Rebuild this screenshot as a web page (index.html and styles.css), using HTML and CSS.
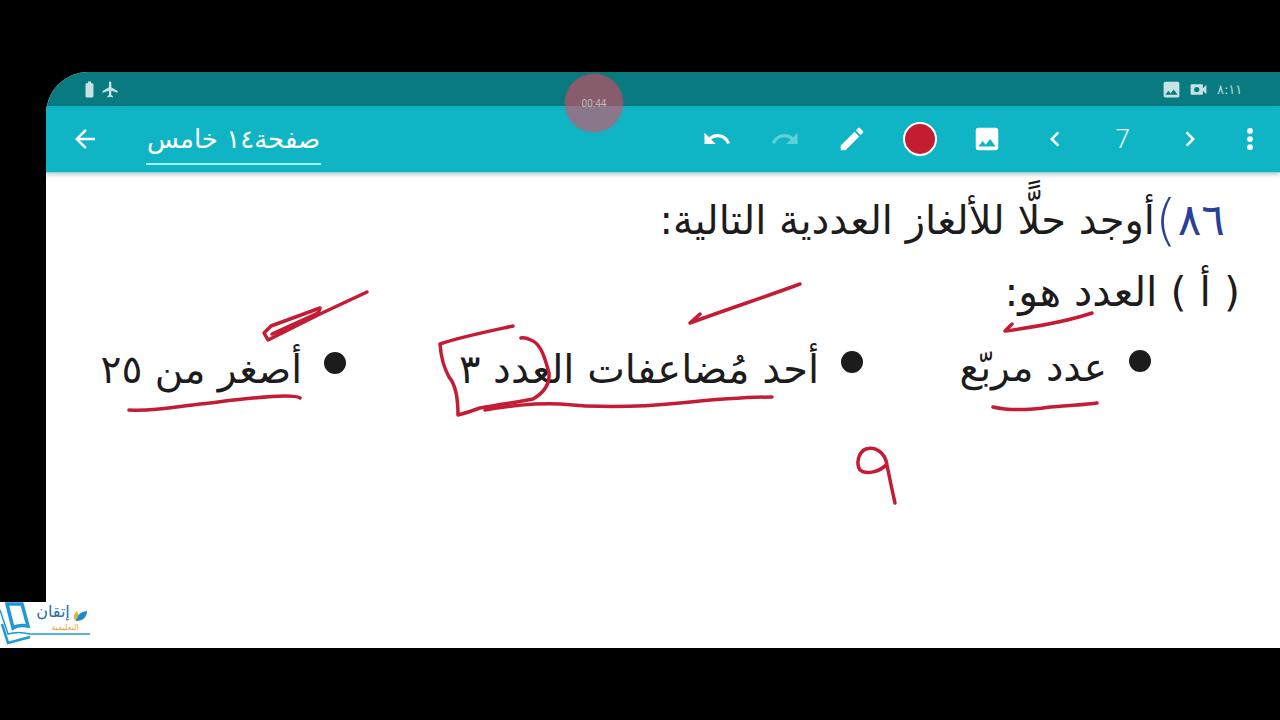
FILE: index.html
```html
<!DOCTYPE html>
<html lang="ar">
<head>
    <meta charset="UTF-8">
    <meta name="viewport" content="width=device-width, initial-scale=1.0">
    <title>Whiteboard recording</title>
    <link rel="stylesheet" href="styles.css">
</head>
<body>
    <div class="screen">
        <div class="status-bar">
            <div class="status-group left">
                <svg class="status-icon" viewBox="0 0 24 24"><path d="M15.67 4H14V2h-4v2H8.33C7.6 4 7 4.6 7 5.33v15.33C7 21.4 7.6 22 8.33 22h7.33c.74 0 1.34-.6 1.34-1.33V5.33C17 4.6 16.4 4 15.67 4z"/></svg>
                <svg class="status-icon" viewBox="0 0 24 24"><path d="M21 16v-2l-8-5V3.5c0-.83-.67-1.5-1.5-1.5S10 2.67 10 3.5V9l-8 5v2l8-2.5V19l-2 1.5V22l3.5-1 3.5 1v-1.5L13 19v-5.5l8 2.5z"/></svg>
            </div>
            <div class="status-group">
                <svg class="status-icon big" viewBox="0 0 24 24"><path d="M21 19V5c0-1.1-.9-2-2-2H5c-1.1 0-2 .9-2 2v14c0 1.1.9 2 2 2h14c1.1 0 2-.9 2-2zM8.5 13.5l2.5 3.01L14.5 12l4.5 6H5l3.5-4.5z"/></svg>
                <svg class="status-icon big" viewBox="0 0 24 24"><path d="M17 10.5V7c0-.55-.45-1-1-1H4c-.55 0-1 .45-1 1v10c0 .55.45 1 1 1h12c.55 0 1-.45 1-1v-3.5l4 4v-11l-4 4z"/><circle cx="10" cy="12" r="3" fill="#087a80"/></svg>
                <span class="clock">٨:١١</span>
            </div>
        </div>

        <div class="toolbar">
            <svg class="tool back" viewBox="0 0 24 24"><path d="M20 11H7.83l5.59-5.59L12 4l-8 8 8 8 1.41-1.41L7.83 13H20v-2z"/></svg>
            <div class="doc-title" dir="rtl">صفحة١٤ خامس</div>
            <div class="tools">
                <div class="tool-slot"><svg class="tool" viewBox="0 0 24 24"><path d="M12.5 8c-2.65 0-5.05.99-6.9 2.6L2 7v9h9l-3.62-3.62c1.39-1.16 3.16-1.88 5.12-1.88 3.54 0 6.55 2.31 7.6 5.5l2.37-.78C21.08 11.03 17.15 8 12.5 8z"/></svg></div>
                <div class="tool-slot"><svg class="tool disabled" viewBox="0 0 24 24"><path d="M18.4 10.6C16.55 8.99 14.15 8 11.5 8c-4.65 0-8.58 3.03-9.96 7.22L3.9 16c1.05-3.19 4.05-5.5 7.6-5.5 1.95 0 3.73.72 5.12 1.88L13 16h9V7l-3.6 3.6z"/></svg></div>
                <div class="tool-slot"><svg class="tool" viewBox="0 0 24 24"><path d="M3 17.25V21h3.75L17.81 9.94l-3.75-3.75L3 17.25zM20.71 7.04c.39-.39.39-1.02 0-1.41l-2.34-2.34c-.39-.39-1.02-.39-1.41 0l-1.83 1.83 3.75 3.75 1.83-1.83z"/></svg></div>
                <div class="tool-slot"><span class="color-dot"></span></div>
                <div class="tool-slot"><svg class="tool" viewBox="0 0 24 24"><path d="M21 19V5c0-1.1-.9-2-2-2H5c-1.1 0-2 .9-2 2v14c0 1.1.9 2 2 2h14c1.1 0 2-.9 2-2zM8.5 13.5l2.5 3.01L14.5 12l4.5 6H5l3.5-4.5z"/></svg></div>
                <div class="tool-slot"><svg class="tool" viewBox="0 0 24 24"><path d="M15.41 7.41L14 6l-6 6 6 6 1.41-1.41L10.83 12z"/></svg></div>
                <div class="tool-slot page-num">7</div>
                <div class="tool-slot"><svg class="tool" viewBox="0 0 24 24"><path d="M8.59 16.59L10 18l6-6-6-6-1.41 1.41L13.17 12z"/></svg></div>
                <div class="tool-slot last"><svg class="tool" viewBox="0 0 24 24"><circle cx="12" cy="5.5" r="2.3"/><circle cx="12" cy="12" r="2.3"/><circle cx="12" cy="18.5" r="2.3"/></svg></div>
            </div>
        </div>

        <div class="sheet" dir="rtl">
            <div class="question">
                <span class="q-num">٨٦</span>
                <span class="q-paren">)</span>
                <span>أوجد حلًّا للألغاز العددية التالية:</span>
            </div>
            <div class="part">( أ ) العدد هو:</div>
            <div class="choices">
                <div class="choice first"><span class="bullet"></span>عدد مربّع</div>
                <div class="choice second"><span class="bullet"></span>أحد مُضاعفات العدد ٣</div>
                <div class="choice third"><span class="bullet"></span>أصغر من ٢٥</div>
            </div>
        </div>
    </div>

    <div class="rec-badge">00:44</div>

    <!-- pen strokes drawn on the page -->
    <svg class="ink" viewBox="0 0 1280 720">
        <path d="M367 292L320 314L268 340L264 333L271 326L320 308L318 313L272 334"/>
        <path d="M129 410C150 412 175 407 200 404C235 400 265 396 284 396C292 396 298 396 300 398"/>
        <path d="M513 326C490 331 460 337 440 344C441 358 444 368 449 377C456 385 458 398 458 415C466 413 472 411 480 408C500 404 520 402 533 399C545 392 550 384 549 373C545 358 541 345 533 341C529 339 524 337 521 338"/>
        <path d="M485 410C510 406 530 403 560 404C600 408 640 407 680 403C710 400 745 397 772 397"/>
        <path d="M800 284C765 297 725 310 690 323L700 314"/>
        <path d="M1092 313C1065 322 1035 327 1005 331L1012 324"/>
        <path d="M993 407C1010 411 1030 410 1050 407C1068 405 1085 405 1097 403"/>
        <path d="M895 503C892 490 889 475 887 465C885 452 875 446 866 449C858 452 856 464 860 470C866 475 880 472 887 464"/>
    </svg>

    <div class="logo">
        <svg class="logo-book" viewBox="0 0 92 46">
            <path d="M0 8L8 32C14 30 22 30 30 32L90 32" fill="none" stroke="#1c9ad6" stroke-width="1.5"/>
            <path d="M7 2L22 2L28 24C22 23 16 24 13 26Z" fill="none" stroke="#1c9ad6" stroke-width="3.5"/>
            <path d="M2 22L8 41L30 35" fill="none" stroke="#1c9ad6" stroke-width="2.5"/>
            <path d="M76 19C76 14 80 10 87 9C87 15 83 19 76 19Z" fill="#1c8ac8"/>
            <path d="M75 19C73 15 74 12 77 9C79 13 78 16 75 19Z" fill="#e8b030"/>
        </svg>
        <div class="logo-name">إتقان</div>
        <div class="logo-sub">التعليمية</div>
    </div>
</body>
</html>
```

FILE: styles.css
```css
* {
    margin: 0;
    padding: 0;
    box-sizing: border-box;
}

body {
    position: relative;
    width: 1280px;
    height: 720px;
    padding: 72px 0 72px 46px;
    overflow: hidden;
    background-color: #000;
    font-family: "DejaVu Sans", "Noto Sans", sans-serif;
}

.screen {
    height: 576px;
    display: flex;
    flex-direction: column;
    overflow: hidden;
    background: white;
    border-top-left-radius: 42px;
}

.status-bar {
    height: 34px;
    flex-shrink: 0;
    display: flex;
    align-items: center;
    justify-content: space-between;
    padding: 0 33px 0 34px;
    background-color: #087a80;
}

.status-group {
    display: flex;
    align-items: center;
    gap: 6px;
}

.status-group.left {
    gap: 2px;
}

.status-icon {
    width: 19px;
    height: 19px;
    fill: #c4e3e2;
}

.status-icon.big {
    width: 21px;
    height: 21px;
}

.clock {
    margin-left: 2px;
    width: 30px;
    font-size: 13px;
    color: #b5dcdc;
}

.toolbar {
    height: 67px;
    flex-shrink: 0;
    display: flex;
    align-items: center;
    background-color: #0fb5c5;
    border-bottom: 1px solid #7ddde0;
    box-shadow: 0 2px 4px rgba(0, 0, 0, 0.2);
    z-index: 1;
}

.tool {
    width: 30px;
    height: 30px;
    fill: white;
}

.tool.back {
    margin-left: 24px;
}

.tool.disabled {
    fill: #5fd0d8;
}

.doc-title {
    width: 175px;
    margin-left: 46px;
    margin-top: 8px;
    padding-bottom: 7px;
    font-size: 26px;
    line-height: 34px;
    text-align: center;
    white-space: nowrap;
    color: white;
    border-bottom: 2px solid #a9f0f0;
}

.tools {
    margin-left: auto;
    display: flex;
    align-items: center;
}

.tool-slot {
    width: 67.6px;
    display: flex;
    justify-content: center;
    align-items: center;
}

.tool-slot.last {
    width: 52px;
    margin-right: 4px;
}

.page-num {
    font-family: "Roboto", sans-serif;
    font-size: 26px;
    font-weight: 300;
    color: #e8fafa;
}

.color-dot {
    width: 34px;
    height: 34px;
    border-radius: 50%;
    background-color: #c41c30;
    border: 2px solid white;
}

.sheet {
    flex: 1;
    padding: 22px 40px 0 0;
    color: #1c1c1c;
}

.question {
    display: flex;
    align-items: center;
    gap: 0;
    height: 50px;
    font-size: 40px;
    line-height: 50px;
    white-space: nowrap;
}

.q-num {
    padding-right: 15px;
    font-size: 44px;
    color: #2a3f96;
}

.q-paren {
    margin: 0 1px 0 0;
    font-size: 56px;
    font-weight: 200;
    color: #2a3f96;
}

.part {
    margin-top: 22px;
    font-size: 41px;
    line-height: 50px;
}

.choices {
    display: flex;
    margin-top: 24px;
    font-size: 39px;
    line-height: 50px;
}

.choice {
    display: flex;
    align-items: center;
    white-space: nowrap;
}

.choice.first {
    margin-right: 89px;
    width: 288px;
}

.choice.second {
    width: 517px;
    margin-top: 2px;
    font-size: 40px;
}

.choice.third {
    margin-top: 4px;
}

.bullet {
    width: 22px;
    height: 22px;
    margin-left: 22px;
    margin-bottom: 14px;
    border-radius: 50%;
    background-color: #1c1c1c;
}

.rec-badge {
    position: absolute;
    left: 565px;
    top: 74px;
    z-index: 2;
    width: 58px;
    height: 58px;
    display: flex;
    align-items: center;
    justify-content: center;
    border-radius: 50%;
    font-family: "Roboto", sans-serif;
    font-size: 10px;
    color: #bbb;
    background-color: rgba(240, 70, 90, 0.55);
    box-shadow: 0 0 3px rgba(240, 70, 90, 0.5);
}

.ink {
    position: absolute;
    left: 0;
    top: 0;
    width: 1280px;
    height: 720px;
    pointer-events: none;
}

.ink path {
    fill: none;
    stroke: #c41c34;
    stroke-width: 3.5;
    stroke-linecap: round;
    stroke-linejoin: round;
}

.logo {
    position: absolute;
    left: 0;
    top: 602px;
    width: 92px;
    height: 46px;
    background-color: white;
    border-radius: 0 20px 20px 0;
}

.logo-book {
    position: absolute;
    left: 0;
    top: 0;
    width: 92px;
    height: 46px;
}

.logo-name {
    position: absolute;
    left: 32px;
    top: 0;
    width: 42px;
    font-size: 16px;
    line-height: 20px;
    text-align: center;
    color: #1b6ea8;
}

.logo-sub {
    position: absolute;
    left: 40px;
    top: 21px;
    width: 50px;
    font-size: 8px;
    line-height: 10px;
    text-align: center;
    color: #e8a030;
}
```
